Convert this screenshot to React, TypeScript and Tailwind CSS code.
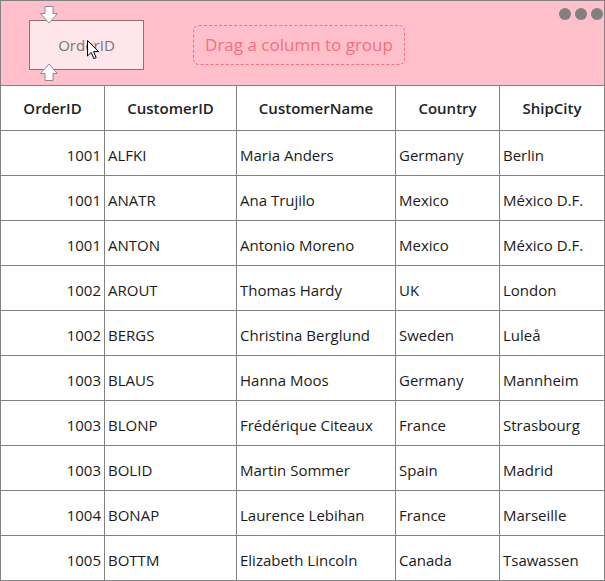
const columns = ['OrderID', 'CustomerID', 'CustomerName', 'Country', 'ShipCity'];

const orders = [
    ['1001', 'ALFKI', 'Maria Anders', 'Germany', 'Berlin'],
    ['1001', 'ANATR', 'Ana Trujilo', 'Mexico', 'México D.F.'],
    ['1001', 'ANTON', 'Antonio Moreno', 'Mexico', 'México D.F.'],
    ['1002', 'AROUT', 'Thomas Hardy', 'UK', 'London'],
    ['1002', 'BERGS', 'Christina Berglund', 'Sweden', 'Luleå'],
    ['1003', 'BLAUS', 'Hanna Moos', 'Germany', 'Mannheim'],
    ['1003', 'BLONP', 'Frédérique Citeaux', 'France', 'Strasbourg'],
    ['1003', 'BOLID', 'Martin Sommer', 'Spain', 'Madrid'],
    ['1004', 'BONAP', 'Laurence Lebihan', 'France', 'Marseille'],
    ['1005', 'BOTTM', 'Elizabeth Lincoln', 'Canada', 'Tsawassen'],
];

const gridCols = 'grid grid-cols-[103px_132px_159px_104px_105px]';

function DragArrow({ up }: { up?: boolean }) {
    return (
        <svg width="18" height="18" viewBox="0 0 18 18" className={up ? 'rotate-180' : ''}>
            <path d="M5 0.5 H13 V7.5 H17.5 L9 17 L0.5 7.5 H5 Z" fill="#fff" stroke="#8c8c8c" strokeWidth="1" strokeLinejoin="round" />
        </svg>
    );
}

function Cursor() {
    return (
        <svg width="13" height="20" viewBox="0 0 13 20">
            <path d="M0.5 0.5 V16 L4.2 12.4 L6.8 18.6 L9.2 17.6 L6.6 11.6 H11.6 Z" fill="#fff" stroke="#000" strokeWidth="1" strokeLinejoin="round" />
        </svg>
    );
}

export default function App() {
    return (
        <div className="w-[605px] h-[581px] bg-white font-['Open_Sans',sans-serif] text-[15px] text-[#1a1a1a] border border-[#828282] overflow-hidden">
            {/* Group drop area */}
            <div className="relative h-[85px] bg-[#ffc0cb] border-b border-[#828282] flex items-start pl-[28px]">
                <div className="relative mt-[19px] w-[115px] h-[50px] bg-[#ffe6ea] border border-[#8f6e74] flex items-center justify-center text-[#757575]">
                    OrderID
                    <div className="absolute -top-[15px] left-[10px]">
                        <DragArrow />
                    </div>
                    <div className="absolute -bottom-[12px] left-[10px]">
                        <DragArrow up />
                    </div>
                    <div className="absolute top-[19px] left-[57px]">
                        <Cursor />
                    </div>
                </div>
                <div className="ml-[49px] mt-[24px] w-[212px] h-[40px] rounded-[6px] border border-dashed border-[#f5707e] flex items-center justify-center text-[17px] text-[#f2707c]">
                    Drag a column to group
                </div>
                <div className="absolute top-[7px] right-[1px] flex gap-[4px]">
                    <span className="w-[12px] h-[12px] rounded-full bg-[#808080]" />
                    <span className="w-[12px] h-[12px] rounded-full bg-[#808080]" />
                    <span className="w-[12px] h-[12px] rounded-full bg-[#808080]" />
                </div>
            </div>

            {/* Grid */}
            <div className={`${gridCols} h-[45px] border-b border-[#828282] font-semibold text-[#222]`}>
                {columns.map((c, i) => (
                    <div key={c} className={`flex items-center justify-center ${i > 0 ? 'border-l border-[#828282]' : ''}`}>
                        {c}
                    </div>
                ))}
            </div>
            {orders.map((row, r) => (
                <div key={r} className={`${gridCols} h-[45px] ${r < orders.length - 1 ? 'border-b border-[#828282]' : ''}`}>
                    {row.map((cell, i) => (
                        <div
                            key={i}
                            className={`flex items-center pt-[4px] px-[3px] ${i > 0 ? 'border-l border-[#828282]' : 'justify-end'}`}
                        >
                            {cell}
                        </div>
                    ))}
                </div>
            ))}
        </div>
    );
}
